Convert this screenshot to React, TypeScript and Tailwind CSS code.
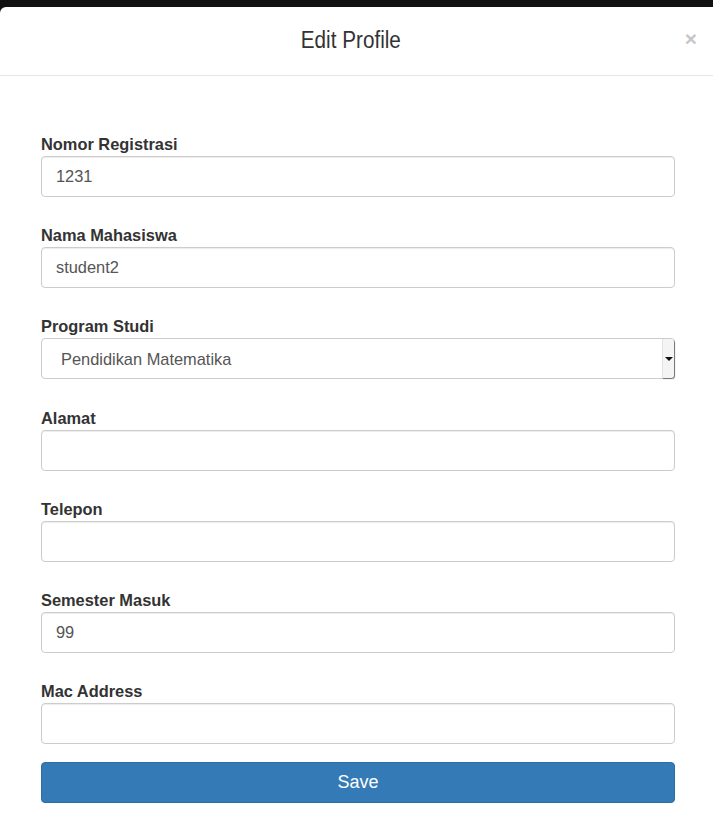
import React from "react";

interface FieldProps {
  label: string;
  value?: string;
}

const Field: React.FC<FieldProps> = ({ label, value }) => (
  <div className="flex flex-col">
    <label className="h-[20px] leading-[20px] text-[16.4px] font-bold text-[#333] mb-[2px]">{label}</label>
    <div className="h-[41px] rounded-[4px] border border-[#ccc] bg-white px-[14px] flex items-center text-[16.4px] text-[#555] shadow-[inset_0_1px_1px_rgba(0,0,0,0.075)]">
      {value}
    </div>
  </div>
);

const SelectField: React.FC<FieldProps> = ({ label, value }) => (
  <div className="flex flex-col">
    <label className="h-[20px] leading-[20px] text-[16.4px] font-bold text-[#333] mb-[2px]">{label}</label>
    <div className="h-[41px] rounded-[4px] border border-[#ccc] bg-white flex items-stretch text-[16.4px] text-[#555]">
      <div className="flex-1 flex items-center pl-[19px]">{value}</div>
      <div className="w-[12px] bg-[#f4f4f4] border-l border-[#e4e4e4] rounded-r-[3px] shadow-[1px_1px_1px_rgba(0,0,0,0.45)] flex items-center justify-center">
        <div className="w-0 h-0 border-l-[4px] border-r-[4px] border-t-[4px] border-l-transparent border-r-transparent border-t-[#111]" />
      </div>
    </div>
  </div>
);

export default function App() {
  return (
    <div className="min-h-[837px] bg-[#111] pt-[7px] font-['Liberation_Sans',Arial,sans-serif]">
      <div className="bg-white rounded-tl-[6px] min-h-[830px]">
        <div className="h-[69px] border-b border-[#e5e5e5] grid grid-cols-[1fr_auto_1fr] items-center">
          <div />
          <h4 className="text-[23.5px] text-[#333] leading-none scale-x-[0.88] pb-[1px] mr-[11px]">Edit Profile</h4>
          <div className="flex justify-end pr-[16px] pb-[6px]">
            <span className="text-[21px] font-bold text-[#c6c6c6] leading-none">×</span>
          </div>
        </div>
        <div className="pl-[41px] pr-[38px] pt-[58px] pb-[35px]">
          <div className="flex flex-col gap-[28.2px]">
            <Field label="Nomor Registrasi" value="1231" />
            <Field label="Nama Mahasiswa" value="student2" />
            <SelectField label="Program Studi" value="Pendidikan Matematika" />
            <Field label="Alamat" />
            <Field label="Telepon" />
            <Field label="Semester Masuk" value="99" />
            <Field label="Mac Address" />
          </div>
          <button className="mt-[18px] w-full h-[41px] rounded-[4px] bg-[#337ab7] border border-[#2e6da4] text-white text-[18px]">
            Save
          </button>
        </div>
      </div>
    </div>
  );
}
